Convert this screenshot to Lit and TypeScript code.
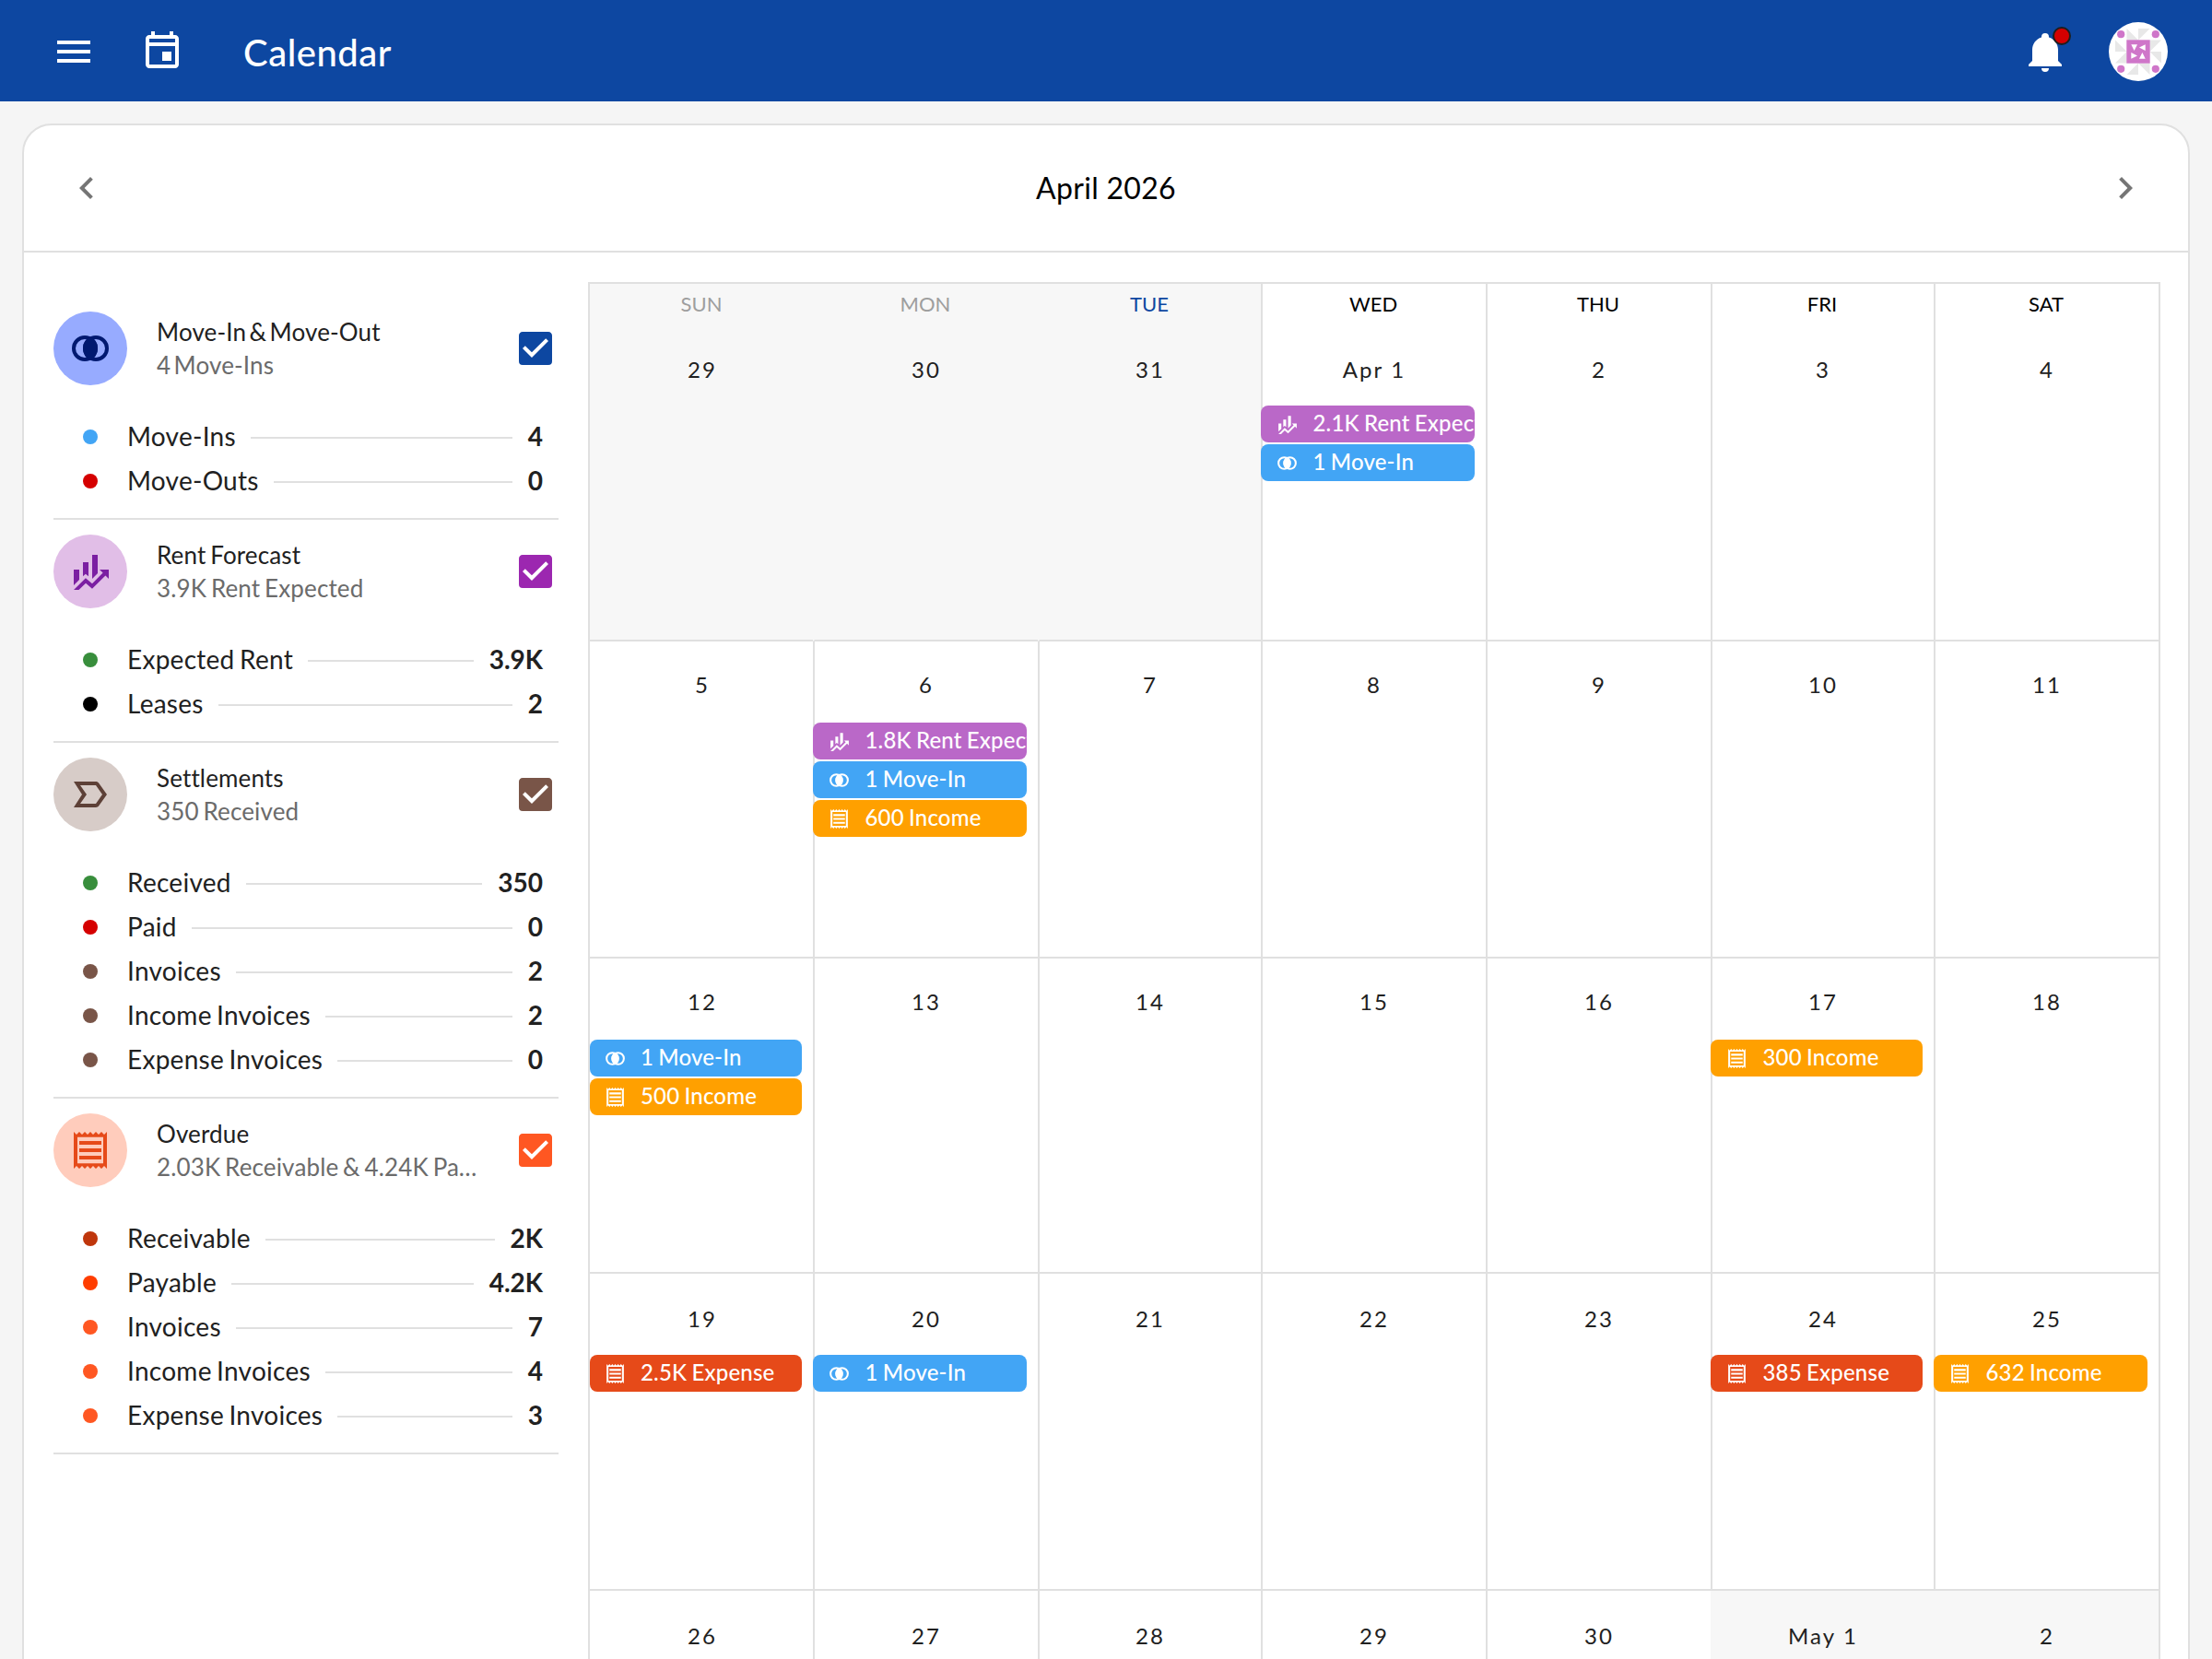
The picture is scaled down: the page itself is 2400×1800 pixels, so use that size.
import { LitElement, html, css, svg } from "lit";
import { customElement, property } from "lit/decorators.js";
import { classMap } from "lit/directives/class-map.js";

const ICONS: Record<string, unknown> = {
  menu: svg`<path d="M3,6H21V8H3V6M3,11H21V13H3V11M3,16H21V18H3V16Z"/>`,
  calendar: svg`<path d="M19,3H18V1H16V3H8V1H6V3H5C3.9,3 3,3.9 3,5V19C3,20.1 3.9,21 5,21H19C20.1,21 21,20.1 21,19V5C21,3.9 20.1,3 19,3M19,19H5V9H19V19M19,7H5V5H19V7M12,12H17V17H12V12Z"/>`,
  bell: svg`<path d="M21,19V20H3V19L5,17V11C5,7.9 7.03,5.17 10,4.29C10,4.19 10,4.1 10,4A2,2 0 0,1 12,2A2,2 0 0,1 14,4C14,4.1 14,4.19 14,4.29C16.97,5.17 19,7.9 19,11V17L21,19M14,21A2,2 0 0,1 12,23A2,2 0 0,1 10,21"/>`,
  left: svg`<path d="M15.41,16.58L10.83,12L15.41,7.41L14,6L8,12L14,18L15.41,16.58Z"/>`,
  right: svg`<path d="M8.59,16.58L13.17,12L8.59,7.41L10,6L16,12L10,18L8.59,16.58Z"/>`,
  check: svg`<path d="M10,17L5,12L6.41,10.58L10,14.17L17.59,6.58L19,8M19,3H5C3.89,3 3,3.89 3,5V19A2,2 0 0,0 5,21H19A2,2 0 0,0 21,19V5C21,3.89 20.1,3 19,3Z"/>`,
  moves: svg`<circle cx="9" cy="12" r="6" fill="none" stroke="currentColor" stroke-width="2"/><circle cx="15" cy="12" r="6" fill="none" stroke="currentColor" stroke-width="2"/><path d="M12,5.68A7,7 0 0,1 12,18.32A7,7 0 0,1 12,5.68Z"/>`,
  finance: svg`<path d="M6,16.5L3,19.44V11H6M11,14.66L9.43,13.32L8,14.64V7H11M16,13L13,16V3H16M18.81,12.81L17,11H22V16L20.21,14.21L13,21.36L9.53,18.34L5.75,22H3L9.47,15.66L13,18.64"/>`,
  label: svg`<path d="M15 19H3l4.5-7L3 5h12c.65 0 1.26.31 1.63.84L21 12l-4.37 6.16c-.37.52-.98.84-1.63.84zm-8.5-2H15l3.5-5L15 7H6.5l3.5 5-3.5 5z"/>`,
  receipt: svg`<path d="M19.5 3.5L18 2l-1.5 1.5L15 2l-1.5 1.5L12 2l-1.5 1.5L9 2 7.5 3.5 6 2 4.5 3.5 3 2v20l1.5-1.5L6 22l1.5-1.5L9 22l1.5-1.5L12 22l1.5-1.5L15 22l1.5-1.5L18 22l1.5-1.5L21 22V2l-1.5 1.5zM19 19.09H5V4.91h14v14.18zM6 15h12v2H6zm0-4h12v2H6zm0-4h12v2H6z"/>`,
};

@customElement("app-icon")
export class AppIcon extends LitElement {
  @property() name = "";
  @property({ type: Number }) size = 48;

  static styles = css`
    :host { display: inline-flex; flex: none; }
    .glyph { display: block; fill: currentColor; }
  `;

  render() {
    return html`<svg class="glyph" width=${this.size} height=${this.size} viewBox="0 0 24 24">${ICONS[this.name]}</svg>`;
  }
}

interface Stat { label: string; value: string; color: string; }
interface Group { key: string; icon: string; title: string; subtitle: string; stats: Stat[]; }

const GROUPS: Group[] = [
  {
    key: "moves", icon: "moves", title: "Move-In & Move-Out", subtitle: "4 Move-Ins",
    stats: [
      { label: "Move-Ins", value: "4", color: "#42a5f5" },
      { label: "Move-Outs", value: "0", color: "#d50000" },
    ],
  },
  {
    key: "rent", icon: "finance", title: "Rent Forecast", subtitle: "3.9K Rent Expected",
    stats: [
      { label: "Expected Rent", value: "3.9K", color: "#388e3c" },
      { label: "Leases", value: "2", color: "#000000" },
    ],
  },
  {
    key: "settle", icon: "label", title: "Settlements", subtitle: "350 Received",
    stats: [
      { label: "Received", value: "350", color: "#388e3c" },
      { label: "Paid", value: "0", color: "#d50000" },
      { label: "Invoices", value: "2", color: "#795548" },
      { label: "Income Invoices", value: "2", color: "#795548" },
      { label: "Expense Invoices", value: "0", color: "#795548" },
    ],
  },
  {
    key: "overdue", icon: "receipt", title: "Overdue", subtitle: "2.03K Receivable & 4.24K Payable",
    stats: [
      { label: "Receivable", value: "2K", color: "#bf360c" },
      { label: "Payable", value: "4.2K", color: "#ff3d00" },
      { label: "Invoices", value: "7", color: "#ff5722" },
      { label: "Income Invoices", value: "4", color: "#ff5722" },
      { label: "Expense Invoices", value: "3", color: "#ff5722" },
    ],
  },
];

@customElement("summary-group")
export class SummaryGroup extends LitElement {
  @property({ attribute: false }) group!: Group;

  static styles = css`
    :host { display: block; }
    .group { border-bottom: 2px solid #e0e0e0; padding: 16px 0; }
    .head { display: flex; align-items: center; height: 80px; margin-bottom: 32px; }
    .avatar { width: 80px; height: 80px; border-radius: 50%; display: flex; align-items: center; justify-content: center; flex: none; }
    .titles { flex: 1; min-width: 0; margin: 0 36px 0 32px; font-size: 26px; line-height: 36px; letter-spacing: 0.14px; word-spacing: -2px; }
    .moves .titles { word-spacing: -3.4px; }
    .title { color: #212121; white-space: nowrap; }
    .subtitle { color: #6b6b6b; white-space: nowrap; overflow: hidden; text-overflow: ellipsis; }
    .box { margin-right: 1px; }
    .moves .avatar { background: #97abff; color: #001970; }
    .moves .box { color: #0d47a1; }
    .rent .avatar { background: #e1bee7; color: #7b1fa2; }
    .rent .box { color: #9c27b0; }
    .settle .avatar { background: #d7ccc8; color: #5d4037; }
    .settle .box { color: #795548; }
    .overdue .avatar { background: #ffccbc; color: #e64a19; }
    .overdue .box { color: #ff5722; }
    .stat { display: flex; align-items: center; height: 48px; padding: 0 17px 0 32px; font-size: 28px; line-height: 46px; color: #212121; white-space: nowrap; }
    .name, .value { height: 48px; }
    .name { letter-spacing: 0.27px; word-spacing: -2px; }
    .dot { width: 16px; height: 16px; border-radius: 50%; margin-right: 32px; flex: none; }
    .rule { flex: 1; height: 2px; background: #e0e0e0; margin: 2px 17px 0 16px; }
    .value { font-weight: 700; }
  `;

  render() {
    const g = this.group;
    return html`
      <section class="group ${g.key}">
        <div class="head">
          <div class="avatar"><app-icon name=${g.icon}></app-icon></div>
          <div class="titles">
            <div class="title">${g.title}</div>
            <div class="subtitle">${g.subtitle}</div>
          </div>
          <app-icon class="box" name="check"></app-icon>
        </div>
        ${g.stats.map((s) => html`
          <div class="stat">
            <span class="dot" style="background:${s.color}"></span>
            <span class="name">${s.label}</span>
            <span class="rule"></span>
            <span class="value">${s.value}</span>
          </div>`)}
      </section>
    `;
  }
}

type Kind = "rent" | "move" | "income" | "expense";
interface CalEvent { kind: Kind; text: string; }

const EVENT_ICON: Record<Kind, string> = { rent: "finance", move: "moves", income: "receipt", expense: "receipt" };

const WEEKDAYS = ["Sun", "Mon", "Tue", "Wed", "Thu", "Fri", "Sat"];
const WEEKS: string[][] = [
  ["29", "30", "31", "Apr 1", "2", "3", "4"],
  ["5", "6", "7", "8", "9", "10", "11"],
  ["12", "13", "14", "15", "16", "17", "18"],
  ["19", "20", "21", "22", "23", "24", "25"],
  ["26", "27", "28", "29", "30", "May 1", "2"],
];
const EVENTS: Record<string, CalEvent[]> = {
  "0-3": [{ kind: "rent", text: "2.1K Rent Expected" }, { kind: "move", text: "1 Move-In" }],
  "1-1": [{ kind: "rent", text: "1.8K Rent Expected" }, { kind: "move", text: "1 Move-In" }, { kind: "income", text: "600 Income" }],
  "2-0": [{ kind: "move", text: "1 Move-In" }, { kind: "income", text: "500 Income" }],
  "2-5": [{ kind: "income", text: "300 Income" }],
  "3-0": [{ kind: "expense", text: "2.5K Expense" }],
  "3-1": [{ kind: "move", text: "1 Move-In" }],
  "3-5": [{ kind: "expense", text: "385 Expense" }],
  "3-6": [{ kind: "income", text: "632 Income" }],
};

@customElement("month-grid")
export class MonthGrid extends LitElement {
  static styles = css`
    :host { display: block; }
    .month {
      display: grid;
      grid-template-columns: 242px 244px 242px 244px 244px 242px 244px;
      grid-template-rows: 388px 344px 342px 344px 344px;
      border: 2px solid #e0e0e0;
    }
    .day { box-sizing: border-box; min-width: 0; border-left: 2px solid #e0e0e0; border-bottom: 2px solid #e0e0e0; display: flex; flex-direction: column; }
    .day.first { border-left: 0; }
    .day.outside { background: #f7f7f7; border-left-color: #f7f7f7; }
    .weekday { font-size: 22px; line-height: 44px; height: 44px; margin-left: -2px; text-align: center; text-transform: uppercase; color: #000; }
    .first .weekday { margin-left: 0; }
    .weekday.past { color: #9e9e9e; }
    .weekday.today { color: #0d47a1; }
    .date { height: 88px; box-sizing: border-box; padding-top: 33px; font-size: 24px; line-height: 32px; letter-spacing: 2.14px; text-align: center; color: #212121; }
    .first .date { padding-left: 2px; }
    .date.high { padding-top: 31px; }
    .events { display: flex; flex-direction: column; gap: 2px; margin: 0 12px 0 -2px; }
    .first .events { margin-left: 0; }
    .event { height: 40px; border-radius: 8px; overflow: hidden; display: flex; align-items: center; padding-left: 16px; color: #fff; font-size: 24px; font-weight: 500; white-space: nowrap; }
    .first .event { padding-left: 14.5px; }
    .label { margin-left: 15.5px; height: 40px; line-height: 38px; letter-spacing: 0.2px; word-spacing: -1.2px; }
    .event.rent { background: #ba68c8; }
    .event.move { background: #42a5f5; }
    .event.income { background: #ffa000; }
    .event.expense { background: #e64a19; }
  `;

  private day(week: number, col: number, label: string) {
    const outside = (week === 0 && col < 3) || (week === 4 && col > 4);
    const events = EVENTS[`${week}-${col}`] ?? [];
    return html`
      <div class=${classMap({ day: true, first: col === 0, outside })}>
        ${week === 0
          ? html`<div class=${classMap({ weekday: true, past: col < 2, today: col === 2 })}>${WEEKDAYS[col]}</div>`
          : ""}
        <div class=${classMap({ date: true, high: week === 1 || week === 2 })}>${label}</div>
        <div class="events">
          ${events.map((e) => html`
            <div class="event ${e.kind}">
              <app-icon name=${EVENT_ICON[e.kind]} size="25"></app-icon>
              <span class="label">${e.text}</span>
            </div>`)}
        </div>
      </div>`;
  }

  render() {
    return html`<div class="month">${WEEKS.map((w, i) => w.map((d, j) => this.day(i, j, d)))}</div>`;
  }
}

@customElement("app-root")
export class AppRoot extends LitElement {
  static styles = css`
    :host { display: block; width: 2400px; height: 1800px; overflow: hidden; background: #f5f5f5; font-family: Lato, "Open Sans", sans-serif; }
    .bar { box-sizing: border-box; height: 110px; background: #0d47a1; color: #fff; display: flex; align-items: center; padding: 2px 48px 0 56px; }
    .bar-event { margin-left: 48px; }
    .bar-title { flex: 1; margin: 2px 0 0 64px; font-size: 40px; line-height: 60px; font-weight: 500; letter-spacing: 0.5px; }
    .bell { position: relative; display: flex; margin-right: 45px; }
    .badge { position: absolute; left: 32px; top: -3px; width: 16px; height: 16px; border: 2px solid #1e1e1e; border-radius: 50%; background: #d50000; }
    .user { display: block; }
    .card { box-sizing: border-box; margin: 24px 24px 0; height: 1960px; background: #fff; border: 2px solid #e0e0e0; border-radius: 32px 32px 0 0; }
    .toolbar { display: flex; align-items: center; justify-content: space-between; height: 136px; padding: 0 44px; border-bottom: 2px solid #e0e0e0; color: #757575; }
    .month-name { font-size: 32px; line-height: 48px; letter-spacing: 0.3px; color: #000; }
    .content { display: flex; padding: 32px 30px 0 32px; gap: 32px; }
    .side { width: 548px; padding-top: 16px; flex: none; }
  `;

  private avatar() {
    return html`
      <svg class="user" width="64" height="64" viewBox="0 0 64 64">
        <circle cx="32" cy="32" r="32" fill="#fff"/>
        <path fill="#e8e8e8" d="M19.5,7V19.5H32ZM32,7H44.5L32,19.5ZM57,19.5H44.5V32ZM57,32V44.5L44.5,32ZM44.5,57V44.5H32ZM32,57H19.5L32,44.5ZM7,44.5H19.5V32ZM7,19.5V32H19.5Z"/>
        <g fill="#cf76c9">
          <circle cx="13.2" cy="13.2" r="4.1"/><circle cx="50.8" cy="13.2" r="4.1"/>
          <circle cx="13.2" cy="50.8" r="4.1"/><circle cx="50.8" cy="50.8" r="4.1"/>
          <path d="M19.3,19.3H44.7V44.7H19.3Z"/>
        </g>
        <path fill="#fff" d="M24.3,24.3H31L27.6,31ZM39.7,24.3V31L33,27.6ZM39.7,39.7H33L36.4,33ZM24.3,39.7V33L31,36.4Z"/>
      </svg>`;
  }

  render() {
    return html`
      <header class="bar">
        <app-icon name="menu"></app-icon>
        <app-icon class="bar-event" name="calendar"></app-icon>
        <h1 class="bar-title">Calendar</h1>
        <div class="bell"><app-icon name="bell"></app-icon><span class="badge"></span></div>
        ${this.avatar()}
      </header>
      <main class="card">
        <div class="toolbar">
          <app-icon name="left"></app-icon>
          <div class="month-name">April 2026</div>
          <app-icon name="right"></app-icon>
        </div>
        <div class="content">
          <aside class="side">${GROUPS.map((g) => html`<summary-group .group=${g}></summary-group>`)}</aside>
          <month-grid></month-grid>
        </div>
      </main>
    `;
  }
}
